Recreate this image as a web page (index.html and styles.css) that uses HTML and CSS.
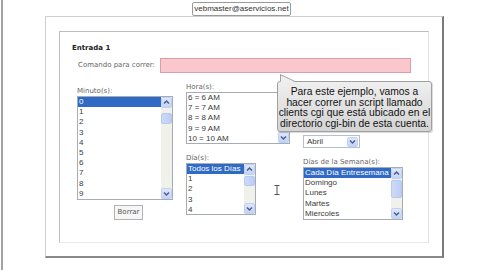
FILE: index.html
```html
<!DOCTYPE html>
<html lang="es">
<head>
<meta charset="utf-8">
<title>Entrada cron</title>
<link rel="stylesheet" href="styles.css">
</head>
<body>
<div class="page">
  <div class="email-row"><span class="email">vebmaster@aservicios.net</span></div>
  <div class="panel">
    <div class="fieldset">
      <div class="title">Entrada 1</div>
      <div class="cmd-row">
        <span class="lbl cmd-lbl">Comando para correr:</span>
        <div class="cmd-input"></div>
      </div>
      <div class="cols">
        <div class="col col1">
          <div class="lbl">Minuto(s):</div>
          <div class="list list-min">
            <div class="items">
              <div class="item sel">0</div>
              <div class="item">1</div>
              <div class="item">2</div>
              <div class="item">3</div>
              <div class="item">4</div>
              <div class="item">5</div>
              <div class="item">6</div>
              <div class="item">7</div>
              <div class="item">8</div>
              <div class="item">9</div>
            </div>
            <div class="sbar">
              <div class="sbtn"><svg width="9" height="9" viewBox="0 0 9 9"><polyline points="2,5.5 4.5,3 7,5.5" fill="none" stroke="#4d6185" stroke-width="1.5"/></svg></div>
              <div class="thumb thumb-min"></div>
              <div class="sfill"></div>
              <div class="sbtn"><svg width="9" height="9" viewBox="0 0 9 9"><polyline points="2,3.5 4.5,6 7,3.5" fill="none" stroke="#4d6185" stroke-width="1.5"/></svg></div>
            </div>
          </div>
          <div class="btn-row"><span class="btn">Borrar</span></div>
        </div>
        <div class="col col2">
          <div class="lbl">Hora(s):</div>
          <div class="list list-hora">
            <div class="items">
              <div class="item">6 = 6 AM</div>
              <div class="item">7 = 7 AM</div>
              <div class="item">8 = 8 AM</div>
              <div class="item">9 = 9 AM</div>
              <div class="item">10 = 10 AM</div>
            </div>
            <div class="sbar">
              <div class="sbtn"><svg width="9" height="9" viewBox="0 0 9 9"><polyline points="2,5.5 4.5,3 7,5.5" fill="none" stroke="#4d6185" stroke-width="1.5"/></svg></div>
              <div class="sfill"></div>
              <div class="sbtn"><svg width="9" height="9" viewBox="0 0 9 9"><polyline points="2,3.5 4.5,6 7,3.5" fill="none" stroke="#4d6185" stroke-width="1.5"/></svg></div>
            </div>
          </div>
          <div class="lbl lbl-dia">Día(s):</div>
          <div class="list list-dia">
            <div class="items">
              <div class="item sel">Todos los Días</div>
              <div class="item">1</div>
              <div class="item">2</div>
              <div class="item">3</div>
              <div class="item">4</div>
            </div>
            <div class="sbar">
              <div class="sbtn"><svg width="9" height="9" viewBox="0 0 9 9"><polyline points="2,5.5 4.5,3 7,5.5" fill="none" stroke="#4d6185" stroke-width="1.5"/></svg></div>
              <div class="thumb thumb-dia"></div>
              <div class="sfill"></div>
              <div class="sbtn"><svg width="9" height="9" viewBox="0 0 9 9"><polyline points="2,3.5 4.5,6 7,3.5" fill="none" stroke="#4d6185" stroke-width="1.5"/></svg></div>
            </div>
          </div>
        </div>
        <div class="col col3">
          <div class="select">
            <span class="sel-text">Abril</span>
            <div class="sbtn sel-btn"><svg width="9" height="9" viewBox="0 0 9 9"><polyline points="2,3.5 4.5,6 7,3.5" fill="none" stroke="#4d6185" stroke-width="1.5"/></svg></div>
          </div>
          <div class="lbl lbl-sem">Días de la Semana(s):</div>
          <div class="list list-sem">
            <div class="items">
              <div class="item sel">Cada Día Entresemana</div>
              <div class="item">Domingo</div>
              <div class="item">Lunes</div>
              <div class="item">Martes</div>
              <div class="item">Miercoles</div>
            </div>
            <div class="sbar">
              <div class="sbtn"><svg width="9" height="9" viewBox="0 0 9 9"><polyline points="2,5.5 4.5,3 7,5.5" fill="none" stroke="#4d6185" stroke-width="1.5"/></svg></div>
              <div class="thumb thumb-sem"></div>
              <div class="sfill"></div>
              <div class="sbtn"><svg width="9" height="9" viewBox="0 0 9 9"><polyline points="2,3.5 4.5,6 7,3.5" fill="none" stroke="#4d6185" stroke-width="1.5"/></svg></div>
            </div>
          </div>
        </div>
      </div>
    </div>
  </div>

  <div class="tooltip">
    <svg class="tail" width="18" height="8" viewBox="0 0 18 8"><polygon points="1.5,0.5 1.5,8 16,8" fill="#efefef"/><polyline points="1.5,7.5 1.5,0.5 16,7.5" fill="none" stroke="#a0a0a0" stroke-width="1"/></svg>
    <p>Para este ejemplo, vamos a<br>hacer correr un script llamado<br>clients cgi que está ubicado en el<br>directorio cgi-bin de esta cuenta.</p>
  </div>

  <svg class="ibeam" width="6" height="10" viewBox="0 0 6 10"><path d="M0.5 0.5 H5.5 M3 0.5 V9.5 M0.5 9.5 H5.5" fill="none" stroke="#555" stroke-width="1"/></svg>
</div>
</body>
</html>
```

FILE: styles.css
```css
html, body {
  margin: 0;
  padding: 0;
  background: #fff;
}

.page {
  position: relative;
  width: 477px;
  height: 270px;
  margin-left: 1px;
  border-left: 2px solid #a3a3a3;
  overflow: hidden;
  background: #fff;
}

.email-row {
  display: flex;
  justify-content: center;
  padding-top: 2px;
}

.email {
  display: block;
  height: 12px;
  line-height: 12px;
  padding: 0 1px;
  border: 1px solid #9a9a9a;
  border-radius: 2px;
  font-family: "Liberation Sans", Arial, sans-serif;
  font-size: 8px;
  color: #333;
}

.panel {
  margin-left: 42px;
  width: 383px;
  height: 213px;
  padding: 14px 0 12px 13px;
  border: 1px solid #cfcfcf;
  border-right: 2px solid #7a7a7a;
  border-bottom: 2px solid #8a8a8a;
}

.fieldset {
  box-sizing: border-box;
  width: 370px;
  height: 212px;
  border: 1px solid #bdbdbd;
  border-right-color: #e2e2e2;
  border-bottom-color: #ececec;
  padding: 12px 0 0 12px;
}

.title {
  font-family: "DejaVu Sans", Verdana, sans-serif;
  font-weight: bold;
  font-size: 7px;
  line-height: 9px;
  color: #222;
}

.lbl {
  font-family: "DejaVu Sans", Verdana, sans-serif;
  font-size: 7px;
  line-height: 9px;
  color: #666;
  white-space: nowrap;
}

.cmd-row {
  display: flex;
  align-items: center;
  margin-top: 5px;
  margin-left: 6px;
  height: 15px;
}

.cmd-lbl {
  width: 82px;
}

.cmd-input {
  box-sizing: border-box;
  width: 251px;
  height: 15px;
  background: #f9c7cc;
  border: 1px solid #d7a0a7;
}

.cols {
  display: grid;
  grid-template-columns: 109px 117px 1fr;
  margin-top: 10px;
  margin-left: 5px;
}

.col1 {
  padding-top: 4px;
}

.list {
  box-sizing: border-box;
  display: flex;
  border: 1px solid #a5acb5;
  background: #fff;
  overflow: hidden;
}

.items {
  flex: 1;
  min-width: 0;
}

.item {
  height: 10.2px;
  line-height: 10.2px;
  padding-left: 1px;
  font-family: "Liberation Sans", Arial, sans-serif;
  font-size: 8px;
  color: #3a3a3a;
  white-space: nowrap;
  overflow: hidden;
}

.item.sel {
  background: #316ac5;
  color: #fff;
}

.sbar {
  display: flex;
  flex-direction: column;
  width: 11px;
  flex: none;
  background: #f1f1ec;
}

.sbtn {
  box-sizing: border-box;
  width: 11px;
  height: 11px;
  display: flex;
  align-items: center;
  justify-content: center;
  background: linear-gradient(#dde7fc, #c3d3f8);
  border: 1px solid #c2d1f2;
  border-radius: 2px;
}

.sfill {
  flex: 1;
}

.thumb {
  box-sizing: border-box;
  width: 11px;
  background: linear-gradient(90deg, #cdd9f8, #bccdf5);
  border: 1px solid #b9c9ee;
  border-radius: 2px;
}

.thumb-min { height: 11px; margin-top: 5px; }
.thumb-dia { height: 10px; margin-top: 1px; }
.thumb-sem { height: 18px; margin-top: 1px; }

.list-min {
  width: 96px;
  height: 104px;
}

.btn-row {
  display: flex;
  padding-left: 37px;
  margin-top: 5px;
}

.btn {
  box-sizing: border-box;
  display: block;
  width: 29px;
  height: 15px;
  line-height: 13px;
  text-align: center;
  border: 1px solid #b3b3b3;
  background: #f6f6f6;
  font-family: "DejaVu Sans", Verdana, sans-serif;
  font-size: 7px;
  color: #555;
}

.list-hora {
  width: 104px;
  height: 52px;
}

.lbl-dia {
  margin-top: 10px;
}

.list-dia {
  width: 70px;
  height: 52px;
}

.col3 {
  padding-top: 52px;
}

.select {
  box-sizing: border-box;
  display: flex;
  align-items: center;
  width: 57px;
  height: 13px;
  border: 1px solid #b5bfcc;
  padding-right: 1px;
}

.sel-text {
  flex: 1;
  padding-left: 3px;
  font-family: "Liberation Sans", Arial, sans-serif;
  font-size: 8px;
  color: #3a3a3a;
}

.sel-btn {
  height: 10px;
}

.lbl-sem {
  margin-top: 10px;
}

.list-sem {
  width: 100px;
  height: 53px;
}

.tooltip {
  position: absolute;
  left: 274px;
  top: 81px;
  box-sizing: border-box;
  width: 155px;
  height: 51px;
  padding-top: 5px;
  border: 1px solid #a0a0a0;
  border-radius: 3px;
  background: linear-gradient(#efefef, #d4d4d4);
  box-shadow: 1px 1px 1px rgba(0,0,0,0.15);
}

.tooltip p {
  margin: 0;
  text-align: center;
  font-family: "Liberation Sans", Arial, sans-serif;
  font-size: 10.3px;
  line-height: 10.7px;
  color: #111;
  white-space: nowrap;
}

.tail {
  position: absolute;
  left: 1px;
  top: -8px;
}

.ibeam {
  position: absolute;
  left: 271px;
  top: 185px;
}
```
